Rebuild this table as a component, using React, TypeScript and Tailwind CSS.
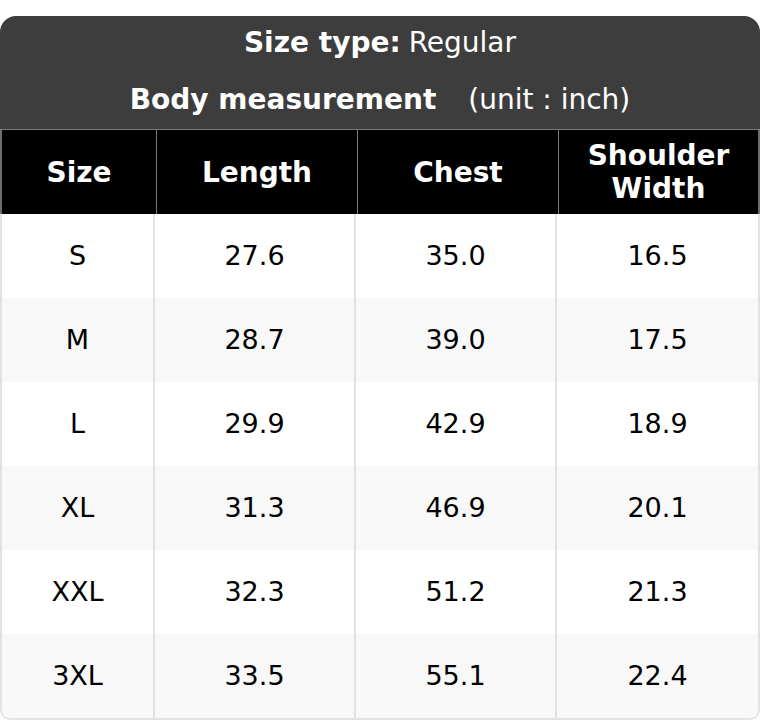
import React from "react";

const rows: [string, string, string, string][] = [
  ["S", "27.6", "35.0", "16.5"],
  ["M", "28.7", "39.0", "17.5"],
  ["L", "29.9", "42.9", "18.9"],
  ["XL", "31.3", "46.9", "20.1"],
  ["XXL", "32.3", "51.2", "21.3"],
  ["3XL", "33.5", "55.1", "22.4"],
];

export default function App() {
  return (
    <div
      className="w-[760px] h-[720px] bg-white pt-[16px]"
      style={{ fontFamily: '"DejaVu Sans", Verdana, sans-serif' }}
    >
      <div className="rounded-t-[16px] bg-[#3d3d3d] text-white text-[28px] border-b border-[#7a7a7a]">
        <div className="h-[54px] flex items-center justify-center">
          <span className="font-bold">Size type:</span>
          <span className="ml-[8px]">Regular</span>
        </div>
        <div className="h-[59px] flex items-center justify-center">
          <span className="font-bold">Body measurement</span>
          <span className="ml-[32px]">(unit : inch)</span>
        </div>
      </div>
      <div className="grid grid-cols-[155px_201px_201px_1fr] bg-black text-white font-bold text-[28px] leading-[33px] h-[84px] border-x-2 border-[#6e6e6e]">
        <div className="flex items-center justify-center border-r border-[#7a7a7a]">Size</div>
        <div className="flex items-center justify-center border-r border-[#7a7a7a]">Length</div>
        <div className="flex items-center justify-center border-r border-[#7a7a7a]">Chest</div>
        <div className="flex flex-col items-center justify-center text-center">
          <span>Shoulder</span>
          <span>Width</span>
        </div>
      </div>
      <div className="border-x-2 border-b-2 border-[#e2e2e2] rounded-b-[10px] overflow-hidden">
        {rows.map((r, i) => (
          <div
            key={r[0]}
            className={
              "grid grid-cols-[153px_201px_201px_1fr] h-[84px] text-[27px] text-black " +
              (i % 2 === 1 ? "bg-[#f8f8f8]" : "bg-white")
            }
          >
            <div className="flex items-center justify-center border-r-2 border-[#e2e2e2]">{r[0]}</div>
            <div className="flex items-center justify-center border-r-2 border-[#e2e2e2]">{r[1]}</div>
            <div className="flex items-center justify-center border-r-2 border-[#e2e2e2]">{r[2]}</div>
            <div className="flex items-center justify-center">{r[3]}</div>
          </div>
        ))}
      </div>
    </div>
  );
}
